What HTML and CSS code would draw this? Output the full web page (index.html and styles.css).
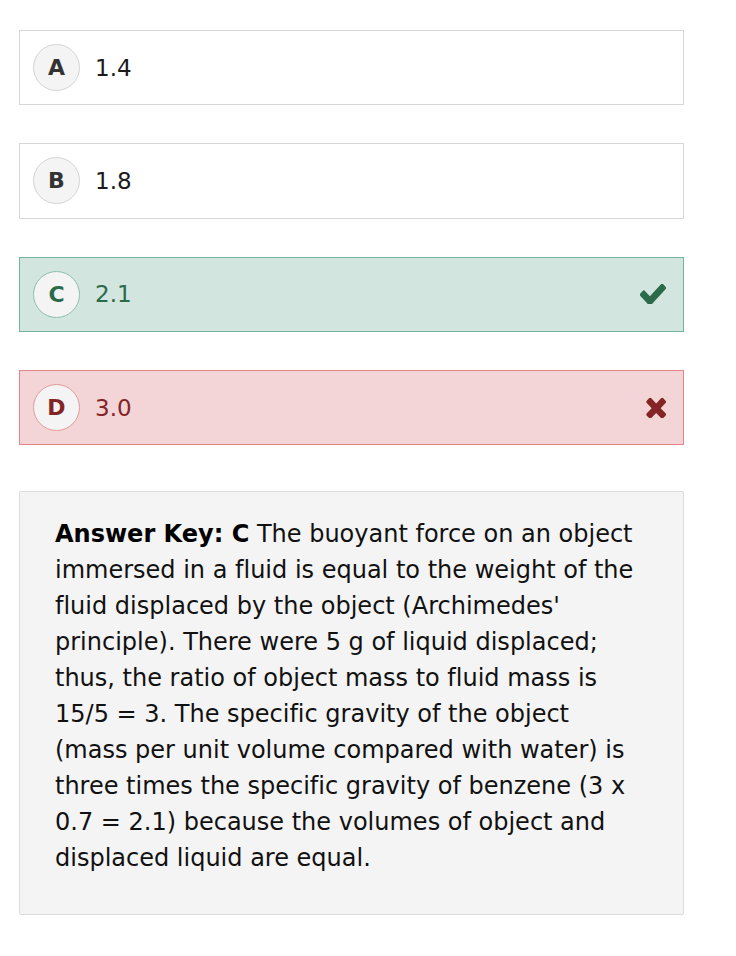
FILE: index.html
```html
<!DOCTYPE html>
<html>
<head>
<meta charset="utf-8">
<link rel="stylesheet" href="styles.css">
</head>
<body>
<div class="page">
  <div class="options">
    <div class="option">
      <span class="letter">A</span>
      <span class="value">1.4</span>
    </div>
    <div class="option">
      <span class="letter">B</span>
      <span class="value">1.8</span>
    </div>
    <div class="option correct">
      <span class="letter">C</span>
      <span class="value">2.1</span>
      <svg class="mark check" width="26" height="20" viewBox="128 352 1543 1082" preserveAspectRatio="none"><path fill="currentColor" d="M1671 566q0 40-28 68l-724 724-136 136q-28 28-68 28t-68-28l-136-136-362-362q-28-28-28-68t28-68l136-136q28-28 68-28t68 28l294 295 656-657q28-28 68-28t68 28l136 136q28 28 28 68z"/></svg>
    </div>
    <div class="option wrong">
      <span class="letter">D</span>
      <span class="value">3.0</span>
      <svg class="mark times" width="20" height="21" viewBox="282 316 1208 1210" preserveAspectRatio="none"><path fill="currentColor" d="M1490 1322q0 40-28 68l-136 136q-28 28-68 28t-68-28l-294-294-294 294q-28 28-68 28t-68-28l-136-136q-28-28-28-68t28-68l294-294-294-294q-28-28-28-68t28-68l136-136q28-28 68-28t68 28l294 294 294-294q28-28 68-28t68 28l136 136q28 28 28 68t-28 68l-294 294 294 294q28 28 28 68z"/></svg>
    </div>
  </div>
  <div class="answer">
    <p><b>Answer Key: C</b> The buoyant force on an object immersed in a fluid is equal to the weight of the fluid displaced by the object (Archimedes' principle). There were 5 g of liquid displaced; thus, the ratio of object mass to fluid mass is 15/5 = 3. The specific gravity of the object (mass per unit volume compared with water) is three times the specific gravity of benzene (3 x 0.7 = 2.1) because the volumes of object and displaced liquid are equal.</p>
  </div>
</div>
</body>
</html>
```
FILE: styles.css
```css
html, body {
  margin: 0;
  padding: 0;
  background: #fff;
}
body {
  font-family: "DejaVu Sans", Verdana, sans-serif;
  font-variant-ligatures: none;
  color: #111;
}
.page {
  width: 665px;
  padding: 30px 0 0 19px;
}
.options {
  display: flex;
  flex-direction: column;
  gap: 38.2px;
}
.option {
  box-sizing: border-box;
  height: 75.2px;
  border: 1px solid #d6d6d6;
  background: #fff;
  display: flex;
  align-items: center;
  padding: 0 17px 0 13px;
}
.letter {
  box-sizing: border-box;
  width: 47px;
  height: 47px;
  border-radius: 50%;
  border: 1px solid #d4d4d4;
  background: #f4f4f4;
  display: flex;
  align-items: center;
  justify-content: center;
  font-weight: bold;
  font-size: 22px;
  color: #333;
  flex-shrink: 0;
}
.value {
  margin-left: 15px;
  font-size: 23px;
  color: #1a1a1a;
  flex: 1;
}
.correct {
  background: #d2e5df;
  border-color: #74b49a;
}
.correct .letter {
  border-color: #8cc1ab;
  color: #2b6b4a;
}
.correct .value, .correct .mark {
  color: #2b6b4a;
}
.wrong {
  background: #f3d5d7;
  border-color: #e48585;
}
.wrong .letter {
  border-color: #e49a9a;
  color: #842424;
}
.wrong .value, .wrong .mark {
  color: #842424;
}
.mark {
  flex-shrink: 0;
}
.answer {
  box-sizing: border-box;
  margin-top: 46px;
  height: 424px;
  background: #f4f4f4;
  border: 1px solid #dcdcdc;
  border-radius: 2px;
  padding: 24px 35px 0 35px;
}
.answer p {
  margin: 0;
  font-size: 24px;
  line-height: 36px;
  color: #111;
}
.answer b {
  color: #000;
}
```
